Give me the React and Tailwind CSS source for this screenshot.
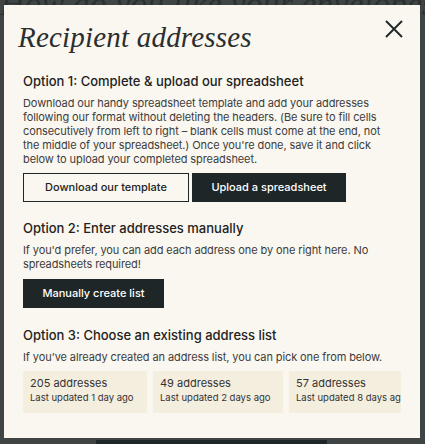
const lists = [
    { count: 205, updated: '1 day ago', w: 'w-[124px]' },
    { count: 49, updated: '2 days ago', w: 'w-[130px]' },
    { count: 57, updated: '8 days ago', w: 'w-[130px]' },
];

function Section({ title, className, children }) {
    return (
        <div className={className}>
            <h3 className="text-[13px] leading-[18px] font-medium text-[#222]">{title}</h3>
            {children}
        </div>
    );
}

export default function App() {
    return (
        <div className="relative w-[425px] h-[444px] overflow-hidden bg-[#3f4445] font-['Inter',sans-serif]">
            {/* page behind the overlay */}
            <p className="text-center mt-[-22px] text-[34px] italic font-['Liberation_Serif',serif] text-[#2c3031] whitespace-nowrap">
                How do you like your envelopes?
            </p>
            <div className="absolute left-[96px] top-[440px] w-[231px] h-[10px] bg-[#1f2628]" />

            {/* modal */}
            <div className="absolute left-[4px] top-[5px] w-[416px] h-[433px] bg-[#faf7f0]">
                <div className="flex items-start justify-between pl-[14px] pr-[17px] pt-[14px]">
                    <h2 className="font-['Liberation_Serif',serif] italic text-[29px] leading-[36px] text-[#2a2e2f] tracking-[0.2px]">
                        Recipient addresses
                    </h2>
                    <button className="mt-[1px] text-[#1f2628]">
                        <svg width="18" height="18" viewBox="0 0 18 18" fill="none" stroke="currentColor" strokeWidth="1.9">
                            <path d="M1 1L17 17M17 1L1 17" />
                        </svg>
                    </button>
                </div>

                <div className="px-[19px] pt-[17px] text-[#3c3c3c]">
                    <Section title="Option 1: Complete & upload our spreadsheet">
                        <p className="mt-[6px] text-[11px] leading-[14px] tracking-[-0.1px] pr-[4px]">
                            Download our handy spreadsheet template and add your addresses following our format
                            without deleting the headers. (Be sure to fill cells consecutively from left to right –
                            blank cells must come at the end, not the middle of your spreadsheet.) Once you're done,
                            save it and click below to upload your completed spreadsheet.
                        </p>
                        <div className="flex gap-[3px] mt-[7px]">
                            <button className="w-[166px] h-[29px] border border-[#1f2628] text-[11px] font-medium text-[#222]">
                                Download our template
                            </button>
                            <button className="w-[154px] h-[29px] bg-[#1f2628] text-[11px] font-medium text-white">
                                Upload a spreadsheet
                            </button>
                        </div>
                    </Section>

                    <Section title="Option 2: Enter addresses manually" className="mt-[17px]">
                        <p className="mt-[6px] text-[11px] leading-[14px] tracking-[-0.1px]">
                            If you'd prefer, you can add each address one by one right here. No spreadsheets required!
                        </p>
                        <button className="mt-[8px] w-[141px] h-[29px] bg-[#1f2628] text-[11px] font-medium text-white">
                            Manually create list
                        </button>
                    </Section>

                    <Section title="Option 3: Choose an existing address list" className="mt-[18px]">
                        <p className="mt-[6px] text-[11px] leading-[14px] tracking-[-0.1px]">
                            If you’ve already created an address list, you can pick one from below.
                        </p>
                        <div className="flex gap-[6px] mt-[7px] overflow-hidden">
                            {lists.map((l) => (
                                <div key={l.count} className={`${l.w} shrink-0 h-[42px] bg-[#f4eedf] pl-[7px] pt-[5px]`}>
                                    <div className="text-[11px] leading-[15px] text-[#333]">{l.count} addresses</div>
                                    <div className="text-[9.5px] leading-[14px] text-[#333] whitespace-nowrap">
                                        Last updated {l.updated}
                                    </div>
                                </div>
                            ))}
                        </div>
                    </Section>
                </div>
            </div>
        </div>
    );
}
